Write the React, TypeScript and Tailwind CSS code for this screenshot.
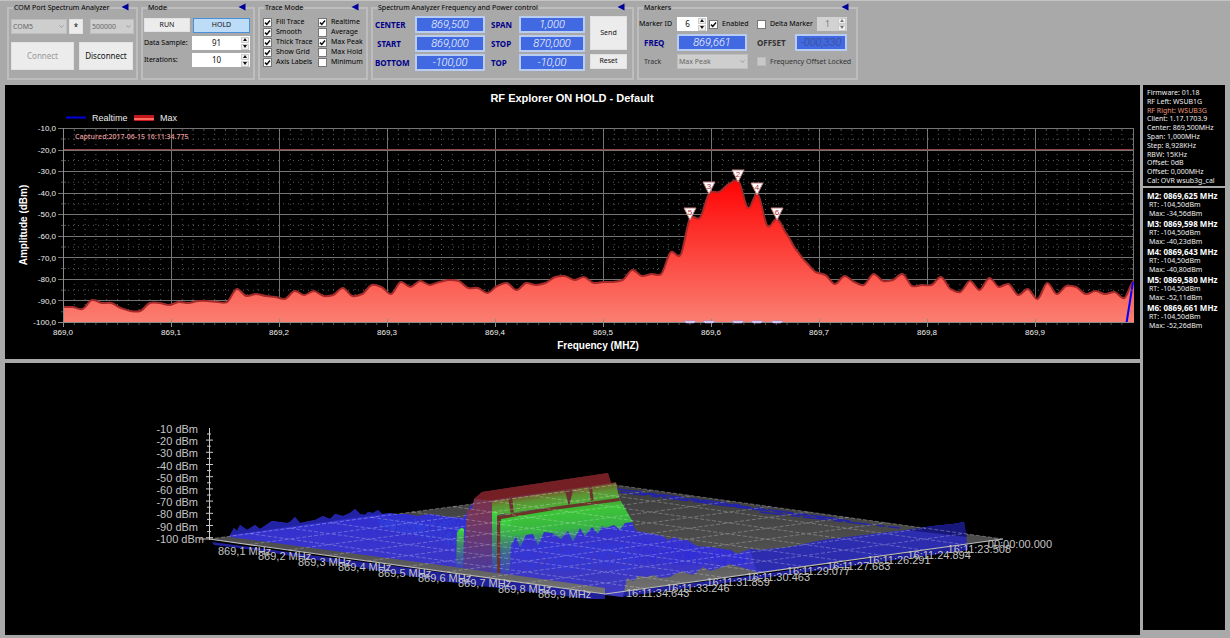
import React, { useState } from "react";
import { ChevronDown } from "lucide-react";

const TRACE = [
  307, 307, 309, 300, 303, 303, 308, 311, 311, 303, 303, 305, 302, 303, 301, 301, 302, 302, 289, 296, 294, 296, 297,
  299, 291, 295, 291, 296, 295, 288, 296, 294, 285, 287, 294, 282, 287, 281, 285, 282, 280, 281, 288, 288, 293, 286,
  283, 290, 283, 285, 283, 277, 276, 280, 277, 283, 282, 282, 280, 270, 276, 274, 274, 252, 255, 218, 218, 193, 192,
  184, 181, 208, 194, 226, 219, 234, 250, 262, 272, 275, 284, 276, 282, 285, 274, 281, 280, 274, 286, 285, 285, 277,
  289, 292, 281, 290, 278, 287, 284, 295, 289, 299, 283, 294, 286, 287, 294, 291, 294, 292, 298, 281,
];

const MARKERS = [
  { id: 2, freq: "0869,625", max: "-34,56", x: 738, y: 182 },
  { id: 3, freq: "0869,598", max: "-40,23", x: 709, y: 194 },
  { id: 4, freq: "0869,643", max: "-40,80", x: 757, y: 195 },
  { id: 5, freq: "0869,580", max: "-52,11", x: 690, y: 220 },
  { id: 6, freq: "0869,661", max: "-52,26", x: 777, y: 220 },
];

const INFO = [
  "Firmware: 01.18",
  "RF Left: WSUB1G",
  "RF Right: WSUB3G",
  "Client: 1.17.1703.9",
  "Center: 869,500MHz",
  "Span: 1,000MHz",
  "Step: 8,928KHz",
  "RBW: 15KHz",
  "Offset: 0dB",
  "Offset: 0,000MHz",
  "Cal: OVR wsub3g_cal",
];

const TIMES = [
  "16:11:34.643",
  "16:11:33.246",
  "16:11:31.859",
  "16:11:30.463",
  "16:11:29.077",
  "16:11:27.683",
  "16:11:26.291",
  "16:11:24.894",
  "16:11:23.508",
  "00:00:00.000",
];

function tracePath() {
  const step = 1071 / (TRACE.length - 1);
  let d = `M63 ${TRACE[0]}`;
  for (let i = 1; i < TRACE.length; i++) {
    const x0 = 63 + (i - 1) * step;
    const x1 = 63 + i * step;
    const s0 = i > 1 ? (TRACE[i] - TRACE[i - 2]) / 8 : 0;
    const s1 = i < TRACE.length - 1 ? (TRACE[i + 1] - TRACE[i - 1]) / 8 : 0;
    d += `C${x0 + step / 3} ${TRACE[i - 1] + s0} ${x1 - step / 3} ${TRACE[i] - s1} ${x1} ${TRACE[i]}`;
  }
  return d;
}

type GroupProps = { title: string; className: string; children: React.ReactNode };

function Group({ title, className, children }: GroupProps) {
  return (
    <fieldset className={"relative h-[77px] min-w-0 shrink-0 border-2 border-[#bdbdbd] " + className}>
      <legend className="ml-1 px-px text-[7px] leading-[9px] text-[#000]">{title}</legend>
      <button type="button" aria-label={"Collapse " + title} className="absolute right-[7px] -top-[9px]">
        <svg className="block h-2 w-2" viewBox="0 0 8 8">
          <path d="M0.5 4L7.5 0.5V7.5Z" fill="#00009a" />
        </svg>
      </button>
      {children}
    </fieldset>
  );
}

type CheckProps = { label: string; checked?: boolean; disabled?: boolean };

function Check({ label, checked = false, disabled = false }: CheckProps) {
  const [on, setOn] = useState(checked);
  return (
    <label className="flex items-center gap-1 whitespace-nowrap text-[7px] leading-[10px]">
      <span className="relative h-[9px] w-[9px] shrink-0">
        <input
          type="checkbox"
          checked={on}
          disabled={disabled}
          onChange={(e) => setOn(e.target.checked)}
          className="peer block h-[9px] w-[9px] appearance-none border border-[#777] bg-white disabled:border-[#bbb] disabled:bg-[#c8c8c8]"
        />
        <svg className="pointer-events-none absolute inset-0 hidden h-[9px] w-[9px] peer-checked:block" viewBox="0 0 9 9">
          <path d="M2 4.6L3.8 6.4L7 2.5" fill="none" stroke="#111" strokeWidth="1.5" />
        </svg>
      </span>
      <span className={disabled ? "text-[#333]" : "text-[#000]"}>{label}</span>
    </label>
  );
}

type SpinProps = { label: string; value: number; disabled?: boolean; className: string };

function Spin({ label, value, disabled = false, className }: SpinProps) {
  const [n, setN] = useState(value);
  return (
    <div className={"flex h-[14px] items-center " + (disabled ? "bg-[#d2d2d2] text-[#777] " : "bg-white text-[#111] ") + className}>
      <input
        aria-label={label}
        value={n}
        disabled={disabled}
        onChange={(e) => setN(Number(e.target.value) || 0)}
        className="w-0 min-w-0 flex-1 text-center text-[8px] leading-3"
      />
      <div className="mr-px flex w-2 flex-col gap-px">
        <button type="button" aria-label={label + " up"} disabled={disabled} onClick={() => setN(n + 1)} className="flex h-[6px] items-center justify-center border border-[#ccc] bg-[#f0f0f0]">
          <svg className="h-[3px] w-1" viewBox="0 0 4 3"><path d="M0 3L2 0L4 3Z" fill="currentColor" /></svg>
        </button>
        <button type="button" aria-label={label + " down"} disabled={disabled} onClick={() => setN(n - 1)} className="flex h-[6px] items-center justify-center border border-[#ccc] bg-[#f0f0f0]">
          <svg className="h-[3px] w-1" viewBox="0 0 4 3"><path d="M0 0L2 3L4 0Z" fill="currentColor" /></svg>
        </button>
      </div>
    </div>
  );
}

function Pick({ label, value, className }: { label: string; value: string; className: string }) {
  return (
    <div className={"relative " + className}>
      <select aria-label={label} disabled className="block h-[15px] w-full appearance-none border border-[#bfbfbf] bg-[#cecece] pl-px text-[7px] leading-3 text-[#666] opacity-100">
        <option>{value}</option>
      </select>
      <ChevronDown className="pointer-events-none absolute right-[2px] top-[4px] h-[7px] w-[7px] text-[#777]" />
    </div>
  );
}

function Lcd({ id, value, dim = false }: { id: string; value: string; dim?: boolean }) {
  return (
    <input
      id={id}
      defaultValue={value}
      disabled={dim}
      className={
        "block h-[17px] w-full min-w-0 border-2 border-[#b9cdf2] bg-[#4169e1] text-center font-[Roboto] text-[11px] font-light italic leading-3 " +
        (dim ? "text-[#3a4880] opacity-100" : "text-white")
      }
    />
  );
}

function LcdLabel({ id, children }: { id: string; children: string }) {
  return (
    <label htmlFor={id} className="block text-[8px] font-bold leading-3 text-[#00008b]">{children}</label>
  );
}

const btn = "flex items-center justify-center bg-[#ececec] border border-[#e2e2e2] text-[#111] ";

function Toolbar() {
  return (
    <header className="flex h-[84px] items-start gap-[3px] overflow-hidden border-t border-[#c4c4c4] pl-[7px] pt-[2px]">
      <Group title="COM Port Spectrum Analyzer" className="w-[131px]">
        <div className="flex px-[2px] pt-[7px]">
          <Pick label="COM port" value="COM5" className="w-[56px]" />
          <button type="button" className={btn + "ml-[2px] h-[15px] w-[14px] text-[8px] leading-3"}>*</button>
          <Pick label="Baud rate" value="500000" className="ml-[7px] w-[44px]" />
        </div>
        <div className="flex gap-[5px] px-[2px] pt-[8px]">
          <button type="button" disabled className={btn + "h-[28px] w-[63px] text-[8px] !text-[#999]"}>Connect</button>
          <button type="button" className={btn + "h-[28px] w-[54px] text-[8px]"}>Disconnect</button>
        </div>
      </Group>

      <Group title="Mode" className="w-[114px]">
        <div className="flex gap-[3px] px-px pt-[6px]">
          <button type="button" className={btn + "h-[14px] w-[46px] text-[7px]"}>RUN</button>
          <button type="button" className="flex h-[15px] w-[57px] items-center justify-center border border-[#4a90d9] bg-[#bddcf7] text-[7px] text-[#111]">HOLD</button>
        </div>
        <div className="flex items-center px-px pt-[3px] text-[7px] text-[#000]">
          <span className="w-[48px] whitespace-nowrap">Data Sample:</span>
          <Spin label="Data Sample" value={91} className="w-[58px]" />
        </div>
        <div className="flex items-center px-px pt-[3px] text-[7px] text-[#000]">
          <span className="w-[48px]">Iterations:</span>
          <Spin label="Iterations" value={10} className="w-[58px]" />
        </div>
      </Group>

      <Group title="Trace Mode" className="w-[110px]">
        <div className="flex gap-[6px] pl-[3px] pt-[5px]">
          <div className="flex w-[49px] flex-col">
            <Check label="Fill Trace" checked />
            <Check label="Smooth" checked />
            <Check label="Thick Trace" checked />
            <Check label="Show Grid" checked />
            <Check label="Axis Labels" checked />
          </div>
          <div className="flex flex-col">
            <Check label="Realtime" checked />
            <Check label="Average" />
            <Check label="Max Peak" checked />
            <Check label="Max Hold" />
            <Check label="Minimum" />
          </div>
        </div>
      </Group>

      <Group title="Spectrum Analyzer Frequency and Power control" className="w-[263px]">
        <div className="flex gap-[5px] pl-[2px] pt-[4px]">
          <div className="grid grid-cols-[40px_70px_34px_66px] items-center gap-y-[2px]">
            <LcdLabel id="center">CENTER</LcdLabel>
            <Lcd id="center" value="869,500" />
            <div className="pl-[6px]"><LcdLabel id="span">SPAN</LcdLabel></div>
            <Lcd id="span" value="1,000" />
            <div className="pl-[2px]"><LcdLabel id="start">START</LcdLabel></div>
            <Lcd id="start" value="869,000" />
            <div className="pl-[6px]"><LcdLabel id="stop">STOP</LcdLabel></div>
            <Lcd id="stop" value="870,000" />
            <LcdLabel id="bottom">BOTTOM</LcdLabel>
            <Lcd id="bottom" value="-100,00" />
            <div className="pl-[6px]"><LcdLabel id="top">TOP</LcdLabel></div>
            <Lcd id="top" value="-10,00" />
          </div>
          <div className="flex flex-col gap-[4px]">
            <button type="button" className={btn + "h-[34px] w-[37px] text-[7px]"}>Send</button>
            <button type="button" className={btn + "h-[15px] w-[37px] text-[7px]"}>Reset</button>
          </div>
        </div>
      </Group>

      <Group title="Markers" className="w-[221px]">
        <div className="grid grid-cols-[38px_80px_1fr] items-center gap-y-[3px] pt-[5px] text-[7px] leading-[10px]">
          <span className="whitespace-nowrap text-[#000]">Marker ID</span>
          <div className="flex items-center gap-[2px]">
            <Spin label="Marker ID" value={6} className="w-[30px]" />
            <Check label="Enabled" checked />
          </div>
          <div className="flex items-center justify-between pr-[9px]">
            <Check label="Delta Marker" />
            <Spin label="Delta marker ID" value={1} disabled className="w-[30px]" />
          </div>
          <div className="pl-[5px]"><LcdLabel id="freq">FREQ</LcdLabel></div>
          <div className="w-[70px]"><Lcd id="freq" value="869,661" /></div>
          <div className="flex items-center justify-between pr-[9px]">
            <label htmlFor="offset" className="text-[8px] font-bold text-[#333]">OFFSET</label>
            <div className="w-[52px]"><Lcd id="offset" value="-000,330" dim /></div>
          </div>
          <span className="pl-[5px] text-[#333]">Track</span>
          <Pick label="Track" value="Max Peak" className="w-[71px]" />
          <Check label="Frequency Offset Locked" disabled />
        </div>
      </Group>
    </header>
  );
}

function SpectrumChart() {
  const line = tracePath();
  const cols = Array.from({ length: 10 }, (_, i) => i);
  return (
    <svg className="block w-full bg-black font-['Liberation_Sans']" viewBox="5 85 1135 274" role="img" aria-label="Spectrum">
      <defs>
        <linearGradient id="fill" gradientUnits="userSpaceOnUse" x1="0" y1="182" x2="0" y2="323">
          <stop offset="0" stopColor="#ff0505" />
          <stop offset="1" stopColor="#fa8072" />
        </linearGradient>
      </defs>
      <text x="572" y="102" textAnchor="middle" fontSize="11" fontWeight="bold" fill="#fff">RF Explorer ON HOLD - Default</text>
      <path d="M66 117.5H86" stroke="#0000e0" strokeWidth="2" />
      <text x="92" y="121" fontSize="9" fill="#eee">Realtime</text>
      <path d="M134 118H154" stroke="#c01818" strokeWidth="6" />
      <path d="M134 119H154" stroke="#ff6a5c" strokeWidth="2" />
      <text x="160" y="121" fontSize="9" fill="#eee">Max</text>

      {/* minor grid */}
      <g stroke="#5c5c5c" strokeWidth="1" strokeDasharray="1 4">
        {Array.from({ length: 99 }, (_, i) => i + 1).filter((i) => i % 10 !== 0).map((i) => (
          <path key={i} d={`M${63.5 + i * 10.8} 134V322`} />
        ))}
        {cols.slice(0, 9).map((i) => (
          <path key={i} d={`M63 ${139 + i * 21.6}H1133`} />
        ))}
      </g>
      {/* major grid */}
      <g stroke="#747474" strokeWidth="1">
        {cols.map((i) => (
          <path key={i} d={`M58 ${Math.round(128 + i * 21.55) + 0.5}H1133`} />
        ))}
        {cols.map((i) => (
          <path key={i} d={`M${63.5 + i * 108} 128V323`} />
        ))}
        <path d="M1133.5 128V323" />
      </g>
      <path d="M63 149.5H1133" stroke="#9a4040" />

      <path d={line + "V323H63Z"} fill="url(#fill)" />
      <path d={line} fill="none" stroke="#a52a2a" strokeWidth="2" />
      <path d="M1126.500 323L1133 282" stroke="#0000ff" strokeWidth="2" />

      <g stroke="#8a8a8a">
        <path d="M58 322.500H1133M63.500 128V327" />
        {cols.map((i) => (
          <path key={i} d={`M${63.5 + i * 108} 319V327`} />
        ))}
        {Array.from({ length: 99 }, (_, i) => i).map((i) => (
          <path key={i} d={`M${63.5 + i * 10.8} 323V325M${63.5 + i * 10.8} 129V131`} opacity="0.6" />
        ))}
        {cols.slice(0, 9).map((i) => (
          <path key={i} d={`M61 ${139 + i * 21.6}H66M1130 ${139 + i * 21.6}H1133`} opacity="0.6" />
        ))}
      </g>

      <g fontSize="8" fill="#eee">
        {cols.map((i) => (
          <text key={i} x="56" y={131 + i * 21.6} textAnchor="end">{`-${(i + 1) * 10},0`}</text>
        ))}
        {cols.map((i) => (
          <text key={i} x={63 + i * 108} y="335" textAnchor="middle">{`869,${i}`}</text>
        ))}
      </g>
      <text x="75" y="139" fontSize="7" fontWeight="600" fill="#e09a9a" className="font-['Open_Sans']">Captured:2017-06-15 16:11:34.775</text>
      <text x="598" y="349" textAnchor="middle" fontSize="10" fontWeight="bold" fill="#fff">Frequency (MHZ)</text>
      <text transform="translate(27 225) rotate(-90)" textAnchor="middle" fontSize="10" fontWeight="bold" fill="#fff">Amplitude (dBm)</text>

      {MARKERS.map((m) => (
        <g key={m.id}>
          <path d={`M${m.x - 6} ${m.y - 12}H${m.x + 6}L${m.x} ${m.y}Z`} fill="#fff" stroke="#c08080" />
          <text x={m.x} y={m.y - 5} textAnchor="middle" fontSize="8" fill="#b03030">{m.id}</text>
          <path d={`M${m.x - 6} 321H${m.x + 6}L${m.x + 4} 323H${m.x - 4}Z`} fill="#e8e0f4" stroke="#9a8ae0" strokeWidth="0.6" />
        </g>
      ))}
    </svg>
  );
}

// floor corners: left, front, right, back
const L = [209, 539];
const F = [605, 594];
const R = [1003, 539];
const B = [615, 485];

function floorLines() {
  const mix = (a: number[], b: number[], t: number) => `${a[0] + (b[0] - a[0]) * t} ${a[1] + (b[1] - a[1]) * t}`;
  let d = "";
  for (let i = 1; i < 10; i++) {
    const t = i / 10;
    d += `M${mix(L, F, t)}L${mix(B, R, t)}M${mix(L, B, t)}L${mix(F, R, t)}`;
  }
  return d;
}

// small repeatable noise for the surface texture
function specks(count: number, x0: number, x1: number, top: (x: number) => number, bottom: (x: number) => number) {
  const rnd = (n: number) => {
    const v = Math.sin(n * 12.9898) * 43758.5453;
    return v - Math.floor(v);
  };
  let d = "";
  for (let i = 0; i < count; i++) {
    const x = x0 + rnd(i + 1) * (x1 - x0);
    const y = top(x) + rnd(i + 500) * (bottom(x) - top(x));
    d += `M${x.toFixed(1)} ${y.toFixed(1)}l${(rnd(i + 900) * 4 - 2).toFixed(1)} ${(2 + rnd(i + 77) * 3).toFixed(1)}`;
  }
  return d;
}

function Waterfall() {
  return (
    <svg className="block w-full bg-black font-['Liberation_Sans']" viewBox="5 363 1135 272" role="img" aria-label="3D waterfall">
      <defs>
        <linearGradient id="floor" x1="0" y1="0" x2="0" y2="1">
          <stop offset="0" stopColor="#3c3c3c" />
          <stop offset="0.6" stopColor="#505050" />
          <stop offset="1" stopColor="#757575" />
        </linearGradient>
        <linearGradient id="wall" x1="0" y1="0" x2="0" y2="1">
          <stop offset="0" stopColor="#7c2a30" />
          <stop offset="0.45" stopColor="#74365c" />
          <stop offset="1" stopColor="#4a3a9c" />
        </linearGradient>
        <linearGradient id="greenTop" gradientUnits="userSpaceOnUse" x1="550" y1="490" x2="553" y2="512">
          <stop offset="0" stopColor="#7a4a28" />
          <stop offset="0.4" stopColor="#5c9434" />
          <stop offset="1" stopColor="#46bc38" />
        </linearGradient>
        <linearGradient id="green" gradientUnits="userSpaceOnUse" x1="560" y1="504" x2="564" y2="546">
          <stop offset="0" stopColor="#4a9a35" />
          <stop offset="0.2" stopColor="#3cc438" />
          <stop offset="0.6" stopColor="#38b444" />
          <stop offset="1" stopColor="#3848c4" />
        </linearGradient>
        <linearGradient id="greenCol" x1="0" y1="0" x2="0" y2="1">
          <stop offset="0" stopColor="#3cd83c" />
          <stop offset="0.4" stopColor="#3f9060" />
          <stop offset="1" stopColor="#3c40b8" />
        </linearGradient>
        <linearGradient id="blueL" x1="0" y1="0" x2="0" y2="1">
          <stop offset="0" stopColor="#2c2cd2" />
          <stop offset="0.5" stopColor="#3834cc" />
          <stop offset="1" stopColor="#403abc" />
        </linearGradient>
      </defs>

      <path d="M209 539L605 594L1003 539L615 485Z" fill="url(#floor)" />
      <path d="M617 489L740 505M620 492L760 510M640 493L840 519M700 502L850 521M760 512L900 528" stroke="#2424a8" strokeWidth="1.5" strokeDasharray="26 5 9 3" />

      {/* skirt below the floor edge */}
      <path d="M212 542L605 594V599H590L440 581L262 551L214 545Z" fill="#20209a" />
      <path d="M605 594L757 575L968 544V550L755 579L620 597Z" fill="#20209a" />

      {/* noise floor surface */}
      <path
        d="M230 535L234 528L237 531L240 525L247 530L255 525L260 529L272 521L287 523L290 522L295 517L300 523L315 520L323 516L330 519L335 514L343 516L350 513L355 509L360 514L365 515L368 512L373 513L378 510L382 514L390 513L397 514L407 514L417 516L430 514L443 516L453 517L463 518L475 500L600 500L632 522L636 531L653 534L663 536L668 540L675 537L680 540L687 540L697 546L710 547L730 550L737 554L750 549L760 550L790 547L823 540L865 535L907 530L933 526L953 524L964 522L967 544L850 558L760 573L730 564L723 567L710 571L703 567L693 575L683 572L677 573L670 577L660 578L653 575L647 577L638 576L633 581L627 578L623 597L605 595V588L470 569L230 537Z"
        fill="url(#blueL)"
      />
      <path d="M230 535L234 528L237 531L240 525L247 530L255 525L260 529L272 521L287 523L290 522L295 517L300 523L315 520L323 516L330 519L335 514L343 516L350 513L355 509L360 514L365 515L368 512L373 513L378 510L382 514L390 513Z" fill="#2222a4" />
      <path d="M750 549L760 550L790 547L823 540L865 535L907 530L933 526L953 524L964 522L967 544L850 560L757 572Z" fill="#2c2cae" />
      <path d="M907 530L933 526L953 524L964 522L967 537Z" fill="#18187c" />
      <path d={specks(240, 380, 464, () => 518, (x) => 519 + (x - 360) * 0.25)} stroke="#2e52ec" opacity="0.45" />
      <path d={specks(380, 512, 636, () => 542, () => 568)} stroke="#2a3cf4" opacity="0.5" />
      <path d={specks(300, 636, 745, (x) => 537 + (x - 636) * 0.13, () => 562)} stroke="#2424f0" opacity="0.5" />

      {/* signal ridge */}
      <path d="M467 510L472 509L474 499L482 492L608 473L611 483L616 482L619 498L500 515L498 573L463 568Z" fill="url(#wall)" />
      <path d="M474 499L482 492L608 473L611 483L491 500Z" fill="#741f24" />
      <path d="M492 501L616 483L619 498L502 514L492 517Z" fill="url(#greenTop)" />
      <path d="M492 512H497V573L492 572Z" fill="url(#greenCol)" />
      <path d="M508 497L511 515H514L512 496ZM565 490L569 507L573 490ZM589 486L591 504H594L592 486Z" fill="#6c3030" />
      <path d="M498 516L510 513L530 511L560 506L578 503L600 499L619 498L633 522L625 523L620 530L614 525L606 528L602 526L598 534L592 527L585 536L580 528L573 542L568 531L561 539L552 533L544 532L538 546L533 534L526 535L520 548L516 536L511 546L509 573L501 572Z" fill="url(#green)" />
      <path d="M497 516L560 506L619 498L620 501L560 509L501 519L500 573H497Z" fill="#6a3428" />
      <path d="M457 533Q460 526 464 529L463 568L456 567Z" fill="url(#greenCol)" />
      <path d="M500 521L511 520L510 574L501 573Z" fill="url(#greenCol)" opacity="0.8" />

      <path d={floorLines()} stroke="#fff" strokeWidth="1" strokeDasharray="4 2" opacity="0.26" />
      <path d="M209 539L615 485L1003 539" fill="none" stroke="#fff" strokeWidth="1" strokeDasharray="4 2" opacity="0.3" />
      <path d="M200 539H209L605 594L1003 539" fill="none" stroke="#bbb" strokeWidth="1.2" />

      <g stroke="#ccc">
        <path d="M209.500 428V540" />
        {Array.from({ length: 18 }, (_, i) => (
          <path key={i} d={i % 2 ? `M206 ${434 + i * 6.1}H213` : `M207 ${434 + i * 6.1}H211`} />
        ))}
      </g>
      <g fontSize="11" fill="#c4c4c4">
        {Array.from({ length: 10 }, (_, i) => (
          <text key={i} x={i === 9 ? 204 : 198} y={433 + i * 12.2} textAnchor="end">{`-${(i + 1) * 10} dBm`}</text>
        ))}
        {Array.from({ length: 9 }, (_, i) => (
          <text key={i} x={218 + i * 40} y={555 + i * 5.4}>{`869,${i + 1} MHz`}</text>
        ))}
        {TIMES.map((t, i) => (
          <text key={t} x={626 + i * 40.2} y={597 - i * 5.5}>{t}</text>
        ))}
      </g>
    </svg>
  );
}

export default function App() {
  return (
    <div className="flex min-h-screen flex-col bg-[#a9a9a9] font-['Noto_Sans',sans-serif] text-[#222]">
      <Toolbar />
      <main className="flex flex-1 gap-[3px] pl-[5px] pr-[5px] pt-px">
        <div className="flex min-w-0 flex-1 flex-col gap-1">
          <SpectrumChart />
          <Waterfall />
        </div>
        <aside className="mb-2 flex w-[82px] flex-col gap-[2px] text-[7px] text-[#eee]">
          <ul className="flex h-[101px] flex-col justify-between bg-black pb-px pl-1 pt-1">
            {INFO.map((t) => (
              <li key={t} className={"whitespace-nowrap leading-[8px] " + (t.startsWith("RF Right") ? "text-[#e9967a]" : "")}>{t}</li>
            ))}
          </ul>
          <ul className="flex flex-1 flex-col gap-px bg-black pl-1 pt-[3px] leading-[9px]">
            {MARKERS.map((m) => (
              <li key={m.id} className="whitespace-nowrap">
                <h2 className="text-[8px] font-bold text-white">{`M${m.id}: ${m.freq} MHz`}</h2>
                <p className="pl-[2px]">RT: -104,50dBm</p>
                <p className="pl-[2px]">{`Max: ${m.max}dBm`}</p>
              </li>
            ))}
          </ul>
        </aside>
      </main>
    </div>
  );
}
